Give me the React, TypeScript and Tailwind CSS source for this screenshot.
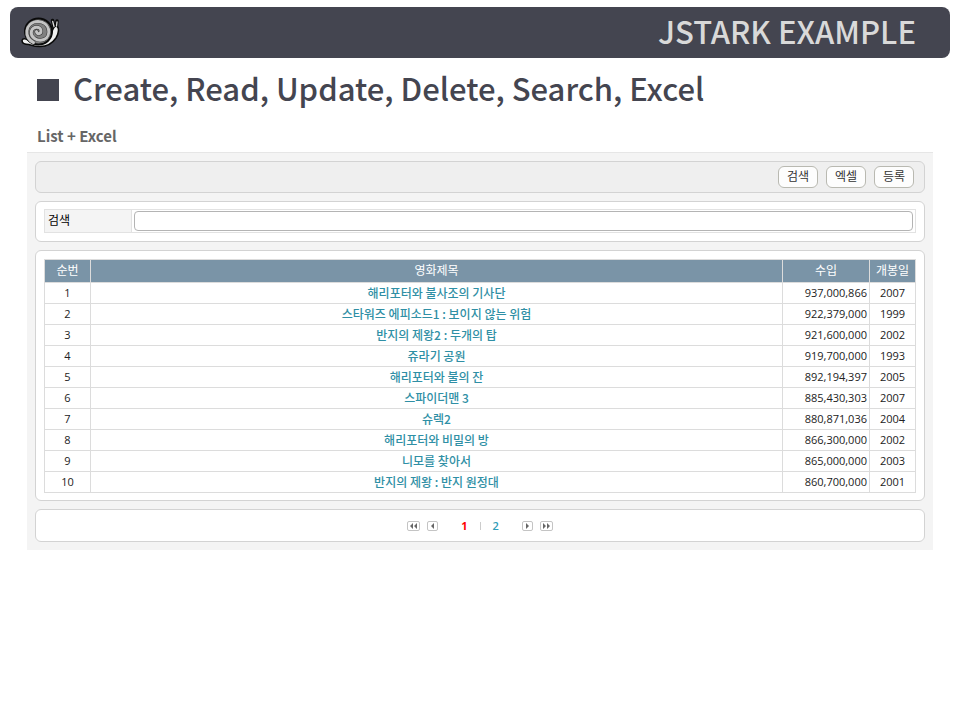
import type { ReactNode } from "react";

type Movie = { no: number; title: string; income: string; year: number };

const movies: Movie[] = [
  { no: 1, title: "해리포터와 불사조의 기사단", income: "937,000,866", year: 2007 },
  { no: 2, title: "스타워즈 에피소드1 : 보이지 않는 위험", income: "922,379,000", year: 1999 },
  { no: 3, title: "반지의 제왕2 : 두개의 탑", income: "921,600,000", year: 2002 },
  { no: 4, title: "쥬라기 공원", income: "919,700,000", year: 1993 },
  { no: 5, title: "해리포터와 불의 잔", income: "892,194,397", year: 2005 },
  { no: 6, title: "스파이더맨 3", income: "885,430,303", year: 2007 },
  { no: 7, title: "슈렉2", income: "880,871,036", year: 2004 },
  { no: 8, title: "해리포터와 비밀의 방", income: "866,300,000", year: 2002 },
  { no: 9, title: "니모를 찾아서", income: "865,000,000", year: 2003 },
  { no: 10, title: "반지의 제왕 : 반지 원정대", income: "860,700,000", year: 2001 },
];

const spiral = "M12.500 25.500 C3 22 3 5 17 4.500 C29 4.500 31 19 23 22.500 C16 25 9 20 10.500 14 C12 9 20 9 20 14 C20 17.500 15.500 17.500 15.500 14.500";

function Snail() {
  return (
    <svg viewBox="0 0 40 32" className="h-8 w-10" aria-hidden="true">
      <path d="M33 10 L31.500 3.500 M35.500 10 L36 4" stroke="#0a0a0a" strokeWidth="3.500" strokeLinecap="round" />
      <path
        d="M1 23.500 C2 20.500 6 22 8 24 C14 29 24 28 28 22 C31 17 31 10 35 9 C39 10 37.500 17 35 21 C31 27 25 29.500 19 29.500 C13 29.500 10 28 8 27.500 C4 27.500 1 26 1 23.500 Z"
        fill="#f0f0f0"
        stroke="#0a0a0a"
        strokeWidth="1.500"
      />
      <path d="M33 9.500 L31.700 4.500 M35.500 9 L36 5" stroke="#dedede" strokeWidth="1.300" strokeLinecap="round" />
      <ellipse cx="17.500" cy="14.500" rx="13.500" ry="13" fill="#808080" stroke="#0a0a0a" strokeWidth="2" />
      <path d={spiral} fill="none" stroke="#333333" strokeWidth="4" strokeLinecap="round" />
      <path d={spiral} fill="none" stroke="#c4c4c4" strokeWidth="3" strokeLinecap="round" />
    </svg>
  );
}

function Panel({ className, children }: { className: string; children: ReactNode }) {
  return <div className={`rounded-md border border-[#d3d3d3] ${className}`}>{children}</div>;
}

function ToolButton({ children }: { children: ReactNode }) {
  return (
    <button
      type="button"
      className="h-[22px] w-10 rounded-md border border-[#b9b9b1] bg-[#fdfdfd] text-xs leading-5 text-[#333333]"
    >
      {children}
    </button>
  );
}

function PagerButton({ label, wide, d }: { label: string; wide?: boolean; d: string }) {
  return (
    <button
      type="button"
      aria-label={label}
      className={`flex h-[10px] items-center justify-center rounded-xs border border-[#c4c4c4] bg-white ${wide ? "w-[13px]" : "w-[11px]"}`}
    >
      <svg viewBox="0 0 7 6" className="h-[6px] w-[7px] shrink-0" aria-hidden="true">
        <path d={d} fill="#666666" />
      </svg>
    </button>
  );
}

export default function App() {
  return (
    <div className="min-h-screen bg-white pt-[7px] font-['Open_Sans','Noto_Sans_CJK_KR',sans-serif] text-[#222222]">
      <header className="mx-[10px] flex h-[51px] items-center justify-between rounded-lg bg-[#444550] pr-[34px] pl-[11px]">
        <Snail />
        <div className="pb-1 font-['Noto_Sans_CJK_KR',sans-serif] text-[31px] leading-10 font-medium text-[#d9d9d9]">
          JSTARK EXAMPLE
        </div>
      </header>

      <h1 className="mt-[10px] flex items-center gap-[14px] pl-[37px] font-['Noto_Sans_CJK_KR',sans-serif] text-[31px] leading-10 font-medium text-[#444550]">
        <span className="mt-1 size-[22px] bg-[#444550]" />
        Create, Read, Update, Delete, Search, Excel
      </h1>

      <main className="mx-[27px] mt-[18px]">
        <h2 className="pl-[10px] font-['Noto_Sans_CJK_KR',sans-serif] text-[15px] leading-5 font-bold text-[#666666]">List + Excel</h2>
        <div className="mt-[6px] flex flex-col gap-2 border-t border-[#e6e6e6] bg-[#f4f4f4] p-2">
          <Panel className="flex h-8 items-center justify-end gap-2 bg-[#efefef] pr-[10px]">
            <ToolButton>검색</ToolButton>
            <ToolButton>엑셀</ToolButton>
            <ToolButton>등록</ToolButton>
          </Panel>

          <Panel className="bg-white px-2 pt-[7px] pb-2">
            <div className="flex h-6 border border-[#e2e2e2]">
              <label
                htmlFor="keyword"
                className="w-[87px] border-r border-[#e2e2e2] bg-[#f4f4f4] pl-[3px] text-xs leading-[22px] text-black"
              >
                검색
              </label>
              <div className="flex flex-1 items-center px-[2px]">
                <input id="keyword" type="text" className="h-5 w-full rounded-sm border border-[#b4b4b4] bg-white px-1 text-xs" />
              </div>
            </div>
          </Panel>

          <Panel className="bg-white px-2 pt-2 pb-[7px]">
            <table className="w-full table-fixed border-collapse text-center text-[11px] leading-5">
              <colgroup>
                <col className="w-[46px]" />
                <col />
                <col className="w-[87px]" />
                <col className="w-[46px]" />
              </colgroup>
              <thead>
                <tr className="h-[23px] bg-[#7a94a7] text-xs text-white">
                  <th className="border border-[#dcdcdc] font-normal">순번</th>
                  <th className="border border-[#dcdcdc] font-normal">영화제목</th>
                  <th className="border border-[#dcdcdc] font-normal">수입</th>
                  <th className="border border-[#dcdcdc] font-normal">개봉일</th>
                </tr>
              </thead>
              <tbody>
                {movies.map((m) => (
                  <tr key={m.no} className="h-[21px]">
                    <td className="border border-[#dcdcdc]">{m.no}</td>
                    <td className="border border-[#dcdcdc] font-['Noto_Sans_CJK_KR',sans-serif] text-xs leading-5 font-medium text-[#2f8fa5]">
                      <a href="#movie">{m.title}</a>
                    </td>
                    <td className="border border-[#dcdcdc] pr-[2px] text-right">{m.income}</td>
                    <td className="border border-[#dcdcdc]">{m.year}</td>
                  </tr>
                ))}
              </tbody>
            </table>
          </Panel>

          <Panel className="flex h-[33px] items-center justify-center bg-white text-[11px]">
            <div className="flex gap-[7px]">
              <PagerButton label="처음" wide d="M3 0 V6 L0 3 Z M7 0 V6 L4 3 Z" />
              <PagerButton label="이전" d="M5 0 V6 L2 3 Z" />
            </div>
            <nav className="mx-[23px] flex items-center gap-3 leading-4">
              <span className="font-bold text-[#ff0000]">1</span>
              <span className="h-2 w-px bg-[#cccccc]" />
              <a href="#page-2" className="font-semibold text-[#2f9db8]">2</a>
            </nav>
            <div className="flex gap-[7px]">
              <PagerButton label="다음" d="M2 0 V6 L5 3 Z" />
              <PagerButton label="마지막" wide d="M0 0 V6 L3 3 Z M4 0 V6 L7 3 Z" />
            </div>
          </Panel>
        </div>
      </main>
    </div>
  );
}
